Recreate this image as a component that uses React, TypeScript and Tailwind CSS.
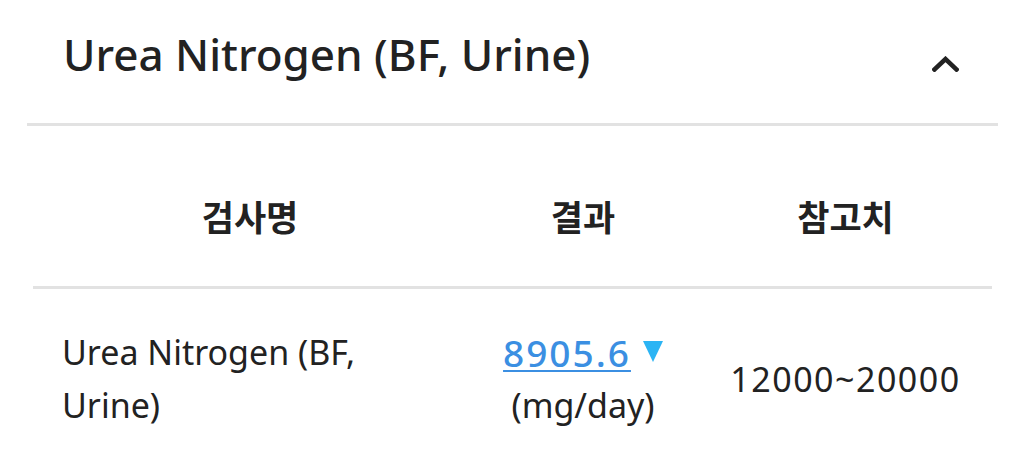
import React from "react";

export default function App() {
  return (
    <div className="w-[1025px] h-[452px] overflow-hidden bg-white text-[#222222] font-['Noto_Sans','Noto_Sans_CJK_KR',sans-serif]">
      {/* Accordion header */}
      <div className="flex h-[123px] items-start justify-between">
        <div className="ml-[63px] mt-[32px] text-[44px] leading-[44px] font-medium">
          Urea Nitrogen (BF, Urine)
        </div>
        <svg
          className="mt-[56px] mr-[66px]"
          width="27"
          height="16"
          viewBox="0 0 27 16"
          fill="none"
        >
          <path
            d="M2.5 13.5 L13.5 3 L24.5 13.5"
            stroke="#222222"
            strokeWidth="4.5"
            strokeLinecap="square"
            strokeLinejoin="miter"
          />
        </svg>
      </div>
      <div className="mx-[27px] h-[3px] bg-[#e2e2e2]" />

      {/* Table */}
      <div className="mx-[33px]">
        <div className="grid grid-cols-[434px_232px_1fr] pt-[72px] pb-[53px] text-[35px] leading-[35px] font-bold font-['Noto_Sans_CJK_KR',sans-serif]">
          <div className="text-center">검사명</div>
          <div className="text-center">결과</div>
          <div className="text-center">참고치</div>
        </div>
        <div className="h-[3px] bg-[#e2e2e2]" />
        <div className="grid grid-cols-[434px_232px_1fr] items-center pt-[37px] text-[34px] leading-[53px]">
          <div className="pl-[29px] pr-[29px]">Urea Nitrogen (BF, Urine)</div>
          <div className="flex flex-col items-center">
            <div className="flex items-center">
              <span className="text-[37px] font-medium tracking-[2px] text-[#3b8fe2] underline decoration-2 underline-offset-[3px]">
                8905.6
              </span>
              <svg className="ml-[12px] -mt-[3px]" width="20" height="21" viewBox="0 0 20 21">
                <path d="M0 0 H20 L10 21 Z" fill="#2bb4f4" />
              </svg>
            </div>
            <div>(mg/day)</div>
          </div>
          <div className="text-center tracking-[1.5px]">12000~20000</div>
        </div>
      </div>
    </div>
  );
}
